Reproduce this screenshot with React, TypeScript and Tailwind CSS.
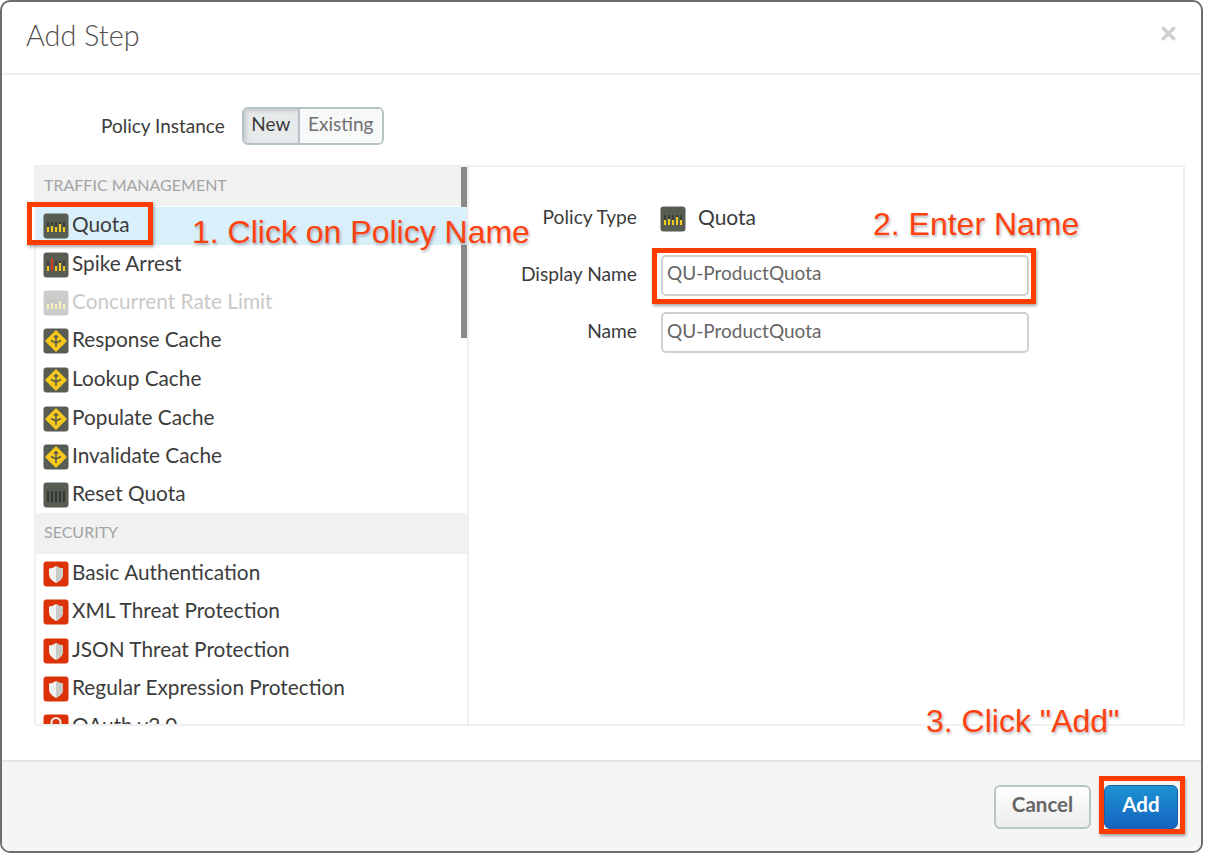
import { X } from 'lucide-react';

type IconKind = 'quota' | 'spike' | 'cache' | 'reset' | 'shield' | 'lock';

function PolicyIcon({ kind, faded }: { kind: IconKind; faded?: boolean }) {
  const red = kind === 'shield' || kind === 'lock';
  return (
    <svg width="26" height="26" viewBox="0 0 26 26" className={`shrink-0 ${faded ? 'opacity-30' : ''}`}>
      <rect x="0.5" y="0.5" width="25" height="25" rx="3" fill={red ? '#db3208' : '#585d54'} />
      {(kind === 'quota' || kind === 'spike') && (
        <g>
          {[5, 9, 13, 17, 21].map((x) => (
            <rect key={x} x={x - 1} y="9" width="2" height="8" fill="#3d403a" />
          ))}
          <rect x="4" y="14" width="2" height="5" fill="#f5cb1d" />
          <rect x="8" y="13" width="2" height="6" fill="#f5cb1d" />
          {kind === 'spike' && <rect x="8" y="6" width="2" height="13" fill="#d33a1c" />}
          <rect x="12" y="14" width="2" height="5" fill="#f5cb1d" />
          <rect x="16" y="11" width="2" height="8" fill="#f5cb1d" />
          <rect x="20" y="14" width="2" height="5" fill="#f5cb1d" />
        </g>
      )}
      {kind === 'cache' && (
        <g>
          <path d="M13 3 L23 13 L13 23 L3 13 Z" fill="#f8c91c" stroke="#f8c91c" strokeLinejoin="round" strokeWidth="1.5" />
          <path d="M13 19 V7.5 M13 7.5 L11 9.5 M13 7.5 L15 9.5 M8 12.5 L13 15 M18 12.5 L13 15" fill="none" stroke="#55584e" strokeWidth="1.5" />
        </g>
      )}
      {kind === 'reset' && (
        <g>
          {[5, 9, 13, 17, 21].map((x) => (
            <rect key={x} x={x - 0.9} y="9" width="1.8" height="11" fill="#33362f" />
          ))}
        </g>
      )}
      {kind === 'shield' && (
        <g>
          <path d="M13 5 Q17 7.5 20 7.5 V13 Q20 18.5 13 22 Q6 18.5 6 13 V7.5 Q9 7.5 13 5 Z" fill="#f1f1ef" />
          <path d="M13 5 Q17 7.5 20 7.5 V13 Q20 18.5 13 22 Z" fill="#c9cbc8" />
        </g>
      )}
      {kind === 'lock' && (
        <g>
          <path d="M8.5 11 V8.5 A4.5 4.5 0 0 1 17.5 8.5 V11" fill="none" stroke="#f1f1ef" strokeWidth="2" />
          <rect x="6" y="11" width="14" height="10" rx="1" fill="#f1f1ef" />
        </g>
      )}
    </svg>
  );
}

function PolicyRow({ kind, label, selected, faded, rowClass }: { kind: IconKind; label: string; selected?: boolean; faded?: boolean; rowClass: string }) {
  return (
    <div className={`relative flex items-center pl-[7px] gap-[3px] text-[20.8px] ${rowClass} ${selected ? 'bg-[#d9eff9]' : ''} ${faded ? 'text-[#c9c9c9]' : 'text-[#3c3c3c]'}`}>
      <PolicyIcon kind={kind} faded={faded} />
      <span className="whitespace-nowrap pb-1">{label}</span>
    </div>
  );
}

function GroupHeader({ children, className }: { children: string; className: string }) {
  return (
    <div className={`flex items-center pl-2 bg-[#f1f1f1] text-[16px] text-[#a3a3a3] ${className}`}>
      <span className="pb-1">{children}</span>
    </div>
  );
}

const annotation = "absolute whitespace-nowrap font-['Liberation_Sans',sans-serif] text-[32px] leading-none text-[#ff4210] [text-shadow:1px_2px_3px_rgba(0,0,0,0.3)]";
const redBox = 'absolute border-[5px] border-[#ff3c00] shadow-[1px_2px_3px_rgba(0,0,0,0.35)]';

export default function App() {
  return (
    <div className="relative w-[1206px] h-[856px] overflow-hidden bg-white font-['Lato','Open_Sans',sans-serif]">
      <div className="flex flex-col w-[1203px] h-[853px] bg-white border-2 border-[#6e6e6e] rounded-[10px] overflow-hidden">
        {/* header */}
        <div className="flex items-center justify-between h-[73px] shrink-0 border-b-2 border-[#eeeeee] pl-6 pr-[22px]">
          <h3 className="font-light text-[28.8px] text-[#4f4f4f] pb-[4px]">Add Step</h3>
          <X size={21} strokeWidth={4} className="text-[#cfcfcf] mb-[8px]" />
        </div>

        {/* body */}
        <div className="flex-1 flex flex-col min-h-0 pl-[32px] pr-[16px]">
          <div className="flex items-center h-[90px] shrink-0 pt-[12px] pl-[67px] gap-[17px]">
            <span className="text-[19px] text-[#3c3c3c]">Policy Instance</span>
            <div className="flex h-[38px] border-2 border-[#b4c4c6] rounded-[6px] overflow-hidden text-[19px] leading-none">
              <div className="flex items-center justify-center w-[56px] pb-[6px] bg-[#e6eaea] text-[#3c3c3c] shadow-[inset_2px_2px_4px_rgba(0,0,0,0.15)] border-r-2 border-[#b4c4c6]">New</div>
              <div className="flex items-center justify-center w-[82px] pb-[6px] bg-[#f7f8f8] text-[#707070]">Existing</div>
            </div>
          </div>

          <div className="flex h-[561px] border-2 border-[#f0f0f0]">
            <div className="relative w-[433px] shrink-0 border-r-2 border-[#f0f0f0] overflow-hidden">
              <div className="absolute left-[425px] top-0 w-[6px] h-[171px] bg-[#8a8a8a]" />
              <GroupHeader className="h-[39px]">TRAFFIC MANAGEMENT</GroupHeader>
              <PolicyRow kind="quota" label="Quota" selected rowClass="h-[38px] mt-[1px]" />
              <PolicyRow kind="spike" label="Spike Arrest" rowClass="h-[39px]" />
              <PolicyRow kind="quota" label="Concurrent Rate Limit" faded rowClass="h-[38px]" />
              <PolicyRow kind="cache" label="Response Cache" rowClass="h-[37px]" />
              <PolicyRow kind="cache" label="Lookup Cache" rowClass="h-[41px]" />
              <PolicyRow kind="cache" label="Populate Cache" rowClass="h-[37px]" />
              <PolicyRow kind="cache" label="Invalidate Cache" rowClass="h-[39px]" />
              <PolicyRow kind="reset" label="Reset Quota" rowClass="h-[37px]" />
              <GroupHeader className="h-[41px]">SECURITY</GroupHeader>
              <PolicyRow kind="shield" label="Basic Authentication" rowClass="h-[39px]" />
              <PolicyRow kind="shield" label="XML Threat Protection" rowClass="h-[38px]" />
              <PolicyRow kind="shield" label="JSON Threat Protection" rowClass="h-[39px]" />
              <PolicyRow kind="shield" label="Regular Expression Protection" rowClass="h-[38px]" />
              <PolicyRow kind="lock" label="OAuth v2.0" rowClass="h-[38px]" />
            </div>

            <div className="flex-1 pt-[32px]">
              <div className="flex items-center h-[40px] text-[19.2px] text-[#3c3c3c]">
                <span className="w-[168px] text-right pb-[4px]">Policy Type</span>
                <div className="flex items-center ml-[23px] gap-[12px]">
                  <PolicyIcon kind="quota" />
                  <span className="text-[21px] pb-1">Quota</span>
                </div>
              </div>
              <div className="flex items-center h-[41px] mt-[16px] text-[19.2px] text-[#3c3c3c]">
                <span className="w-[168px] text-right pb-[2px]">Display Name</span>
                <input readOnly value="QU-ProductQuota" className="ml-[24px] w-[368px] h-[41px] px-[4px] pb-[7px] border-2 border-[#cfcfcf] rounded-[5px] text-[#666666] text-[19px] outline-none" />
              </div>
              <div className="flex items-center h-[41px] mt-[16px] text-[19.2px] text-[#3c3c3c]">
                <span className="w-[168px] text-right pb-[2px]">Name</span>
                <input readOnly value="QU-ProductQuota" className="ml-[24px] w-[368px] h-[41px] px-[4px] pb-[4px] border-2 border-[#cfcfcf] rounded-[5px] text-[#666666] text-[19px] outline-none" />
              </div>
            </div>
          </div>
        </div>

        {/* footer */}
        <div className="flex items-center justify-end gap-[13px] h-[91px] shrink-0 border-t-2 border-[#e3e3e3] bg-[#f5f5f5] pr-[23px] font-bold text-[20.5px]">
          <button className="w-[97px] h-[44px] pb-[4px] rounded-[6px] border-2 border-[#b9c6c8] bg-gradient-to-b from-white to-[#ececec] text-[#666666]">Cancel</button>
          <button className="w-[74px] h-[44px] pb-[4px] rounded-[6px] border border-[#1a5ea8] bg-gradient-to-b from-[#1d93d2] to-[#1763bf] text-white">Add</button>
        </div>
      </div>

      {/* annotations laid over the dialog */}
      <div className={`${redBox} left-[27px] top-[202px] w-[126px] h-[43px]`} />
      <div className={`${redBox} left-[652px] top-[248px] w-[384px] h-[56px]`} />
      <div className={`${redBox} left-[1099px] top-[776px] w-[86px] h-[58px]`} />
      <span className={`${annotation} left-[192px] top-[216px]`}>1. Click on Policy Name</span>
      <span className={`${annotation} left-[873px] top-[208px]`}>2. Enter Name</span>
      <span className={`${annotation} left-[926px] top-[705px]`}>3. Click "Add"</span>
    </div>
  );
}
